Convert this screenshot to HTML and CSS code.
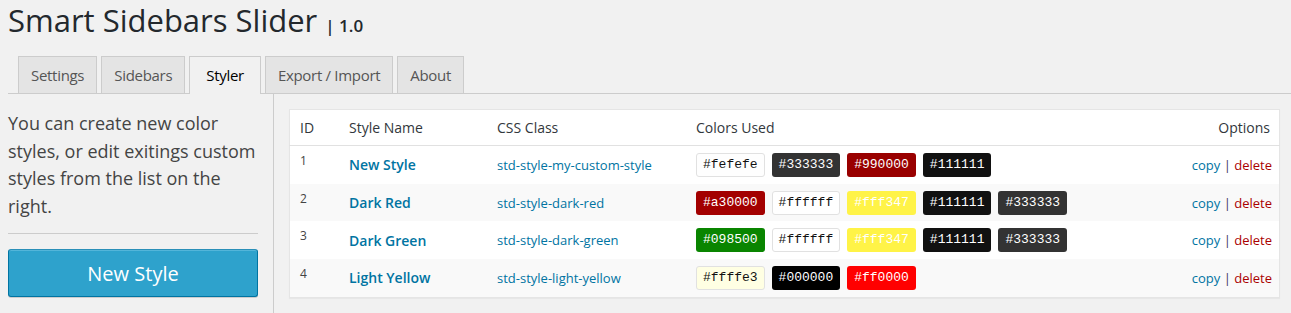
FILE: index.html
```html
<!DOCTYPE html>
<html lang="en">
<head>
<meta charset="UTF-8">
<title>Smart Sidebars Slider</title>
<link rel="stylesheet" href="styles.css">
</head>
<body>
<div class="wrap">
  <h1 class="page-title">Smart Sidebars Slider <span class="version">| 1.0</span></h1>

  <div class="nav-tabs">
    <a class="nav-tab">Settings</a>
    <a class="nav-tab">Sidebars</a>
    <a class="nav-tab active">Styler</a>
    <a class="nav-tab">Export / Import</a>
    <a class="nav-tab">About</a>
  </div>

  <div class="content">
    <div class="side">
      <p class="intro">You can create new color styles, or edit exitings custom styles from the list on the right.</p>
      <hr class="sep">
      <button class="new-btn">New Style</button>
    </div>

    <div class="main">
      <table class="styles-table">
        <thead>
          <tr>
            <th class="col-id">ID</th>
            <th class="col-name">Style Name</th>
            <th class="col-class">CSS Class</th>
            <th class="col-colors">Colors Used</th>
            <th class="col-opts">Options</th>
          </tr>
        </thead>
        <tbody>
          <tr>
            <td class="col-id">1</td>
            <td class="col-name"><a>New Style</a></td>
            <td class="col-class"><a>std-style-my-custom-style</a></td>
            <td class="col-colors">
              <span class="chip light" style="background:#fefefe;color:#111">#fefefe</span>
              <span class="chip" style="background:#333333;color:#fefefe">#333333</span>
              <span class="chip" style="background:#990000;color:#fefefe">#990000</span>
              <span class="chip" style="background:#111111;color:#fefefe">#111111</span>
            </td>
            <td class="col-opts"><a class="copy">copy</a> <span class="bar">|</span> <a class="del">delete</a></td>
          </tr>
          <tr>
            <td class="col-id">2</td>
            <td class="col-name"><a>Dark Red</a></td>
            <td class="col-class"><a>std-style-dark-red</a></td>
            <td class="col-colors">
              <span class="chip" style="background:#a30000;color:#ffffff">#a30000</span>
              <span class="chip light" style="background:#ffffff;color:#111">#ffffff</span>
              <span class="chip" style="background:#fff347;color:#ffffff">#fff347</span>
              <span class="chip" style="background:#111111;color:#ffffff">#111111</span>
              <span class="chip" style="background:#333333;color:#ffffff">#333333</span>
            </td>
            <td class="col-opts"><a class="copy">copy</a> <span class="bar">|</span> <a class="del">delete</a></td>
          </tr>
          <tr>
            <td class="col-id">3</td>
            <td class="col-name"><a>Dark Green</a></td>
            <td class="col-class"><a>std-style-dark-green</a></td>
            <td class="col-colors">
              <span class="chip" style="background:#098500;color:#ffffff">#098500</span>
              <span class="chip light" style="background:#ffffff;color:#111">#ffffff</span>
              <span class="chip" style="background:#fff347;color:#ffffff">#fff347</span>
              <span class="chip" style="background:#111111;color:#ffffff">#111111</span>
              <span class="chip" style="background:#333333;color:#ffffff">#333333</span>
            </td>
            <td class="col-opts"><a class="copy">copy</a> <span class="bar">|</span> <a class="del">delete</a></td>
          </tr>
          <tr>
            <td class="col-id">4</td>
            <td class="col-name"><a>Light Yellow</a></td>
            <td class="col-class"><a>std-style-light-yellow</a></td>
            <td class="col-colors">
              <span class="chip light" style="background:#ffffe3;color:#111">#ffffe3</span>
              <span class="chip" style="background:#000000;color:#ffffff">#000000</span>
              <span class="chip" style="background:#ff0000;color:#ffffff">#ff0000</span>
            </td>
            <td class="col-opts"><a class="copy">copy</a> <span class="bar">|</span> <a class="del">delete</a></td>
          </tr>
        </tbody>
      </table>
    </div>
  </div>
</div>
</body>
</html>
```

FILE: styles.css
```css
body {
  margin: 0;
  background: #f1f1f1;
  color: #444;
  font-family: "Open Sans", sans-serif;
}

.wrap {
  padding-left: 8px;
}

.page-title {
  margin: 0;
  padding-top: 1px;
  font-size: 31px;
  font-weight: 400;
  line-height: 38px;
  color: #23282d;
}

.page-title .version {
  font-size: 17px;
  font-weight: 600;
}

.nav-tabs {
  display: flex;
  gap: 4px;
  margin-top: 11px;
  padding-left: 10px;
  border-bottom: 1px solid #ccc;
  height: 37px;
}

.nav-tab {
  display: block;
  height: 36px;
  line-height: 36px;
  padding: 0 12px;
  font-size: 15px;
  color: #555;
  background: #e4e4e4;
  border: 1px solid #ccc;
  border-bottom: none;
  letter-spacing: -0.3px;
}

.nav-tab.active {
  background: #f1f1f1;
  color: #000;
  height: 37px;
  padding: 0 16px;
}

.content {
  display: flex;
  align-items: stretch;
  min-height: 230px;
}

.side {
  width: 250px;
  padding-top: 16px;
  padding-right: 15px;
  border-right: 1px solid #ccc;
}

.intro {
  margin: 0;
  font-size: 18px;
  line-height: 27.5px;
  color: #444;
}

.sep {
  border: none;
  border-top: 1px solid #ccc;
  margin: 13px 0 15px 0;
}

.new-btn {
  display: block;
  width: 250px;
  height: 48px;
  background: #2ea2cc;
  border: 1px solid #0074a2;
  border-top-color: #2a8fb8;
  border-radius: 3px;
  color: #fff;
  font-family: "Open Sans", sans-serif;
  font-size: 20px;
  box-shadow: inset 0 1px 0 rgba(120,200,230,0.5), 0 1px 0 rgba(0,0,0,0.15);
}

.main {
  flex: 1;
  padding: 15px 11px 0 15px;
}

.styles-table {
  width: 100%;
  border-collapse: collapse;
  background: #fff;
  border: 1px solid #e5e5e5;
  box-shadow: 0 1px 1px rgba(0,0,0,0.04);
}

.styles-table th {
  height: 35px;
  text-align: left;
  font-weight: 400;
  font-size: 14px;
  color: #32373c;
  border-bottom: 1px solid #e1e1e1;
  padding: 0;
}

.styles-table td {
  height: 37.7px;
  padding: 0;
  font-size: 13px;
}

.styles-table tbody tr:nth-child(even) {
  background: #f9f9f9;
}

.col-id {
  width: 49px;
  padding-left: 10px !important;
}

td.col-id {
  vertical-align: top;
  font-size: 12px !important;
  padding-top: 6px !important;
  height: 31.7px !important;
}

.col-name {
  width: 148px;
}

.col-name a {
  color: #0074a2;
  font-size: 14px;
  font-weight: 600;
}

.col-class {
  width: 199px;
}

.col-class a {
  color: #0074a2;
}

td.col-colors {
  font-size: 0;
}

.chip {
  display: inline-block;
  font-family: "Liberation Mono", monospace;
  font-size: 13px;
  line-height: 22px;
  padding: 0 6px;
  border: 1px solid transparent;
  border-radius: 3px;
  margin-right: 7px;
}

.chip.light {
  border-color: #e1e1e1;
}

.col-opts {
  text-align: right;
  padding-right: 7px !important;
}

th.col-opts {
  text-align: right;
  padding-right: 9px !important;
}

.bar {
  color: #3c2f5a;
}

.copy {
  color: #0074a2;
}

.del {
  color: #a00;
}
```
